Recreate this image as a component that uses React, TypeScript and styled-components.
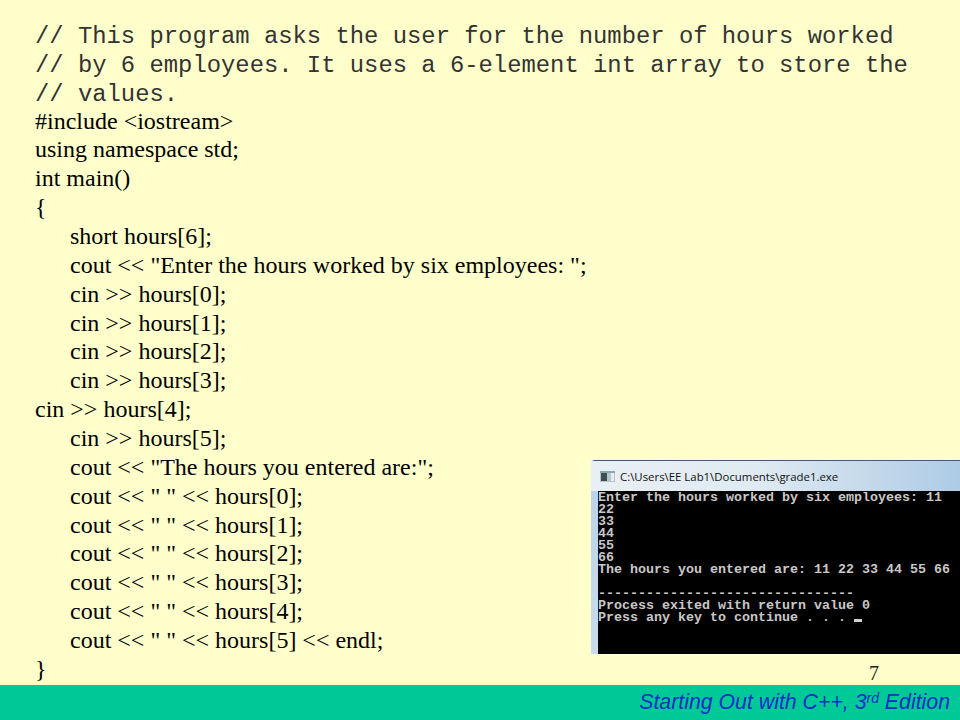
import React from "react";
import styled, { createGlobalStyle } from "styled-components";

const Global = createGlobalStyle`
  html, body {
    margin: 0;
    padding: 0;
  }
  body {
    background: #ffffcc;
  }
`;

const Slide = styled.div`
  position: relative;
  width: 960px;
  height: 720px;
  overflow: hidden;
  display: flex;
  flex-direction: column;
  background: #ffffcc;
`;

const Code = styled.div`
  flex: 1;
  padding: 20px 0 0 35px;
  color: #000;
`;

const Line = styled.div<{ $mono?: boolean; $indent?: boolean }>`
  height: 28.86px;
  line-height: ${(p) => (p.$mono ? "34px" : "28.86px")};
  white-space: pre;
  padding-left: ${(p) => (p.$indent ? "35px" : "0")};
  font-family: ${(p) =>
    p.$mono ? '"Liberation Mono", monospace' : '"Liberation Serif", serif'};
  font-size: ${(p) => (p.$mono ? "23.85px" : "24px")};
  color: ${(p) => (p.$mono ? "#333" : "#000")};
`;

const Footer = styled.div`
  height: 35px;
  flex-shrink: 0;
  display: flex;
  align-items: center;
  justify-content: flex-end;
  padding-right: 10px;
  background: #00c998;
  color: #0a2fc8;
  font-family: "Liberation Sans", Arial, sans-serif;
  font-style: italic;
  font-size: 21.3px;

  sup {
    font-size: 14px;
    line-height: 0;
    vertical-align: 6px;
  }
`;

const PageNumber = styled.div`
  position: absolute;
  left: 869px;
  top: 661px;
  font-family: "Liberation Serif", serif;
  font-size: 20px;
  line-height: 24px;
  color: #222;
`;

const Window = styled.div`
  position: absolute;
  left: 591px;
  top: 460px;
  width: 369px;
  height: 194px;
  box-sizing: border-box;
  display: flex;
  flex-direction: column;
  border-top-left-radius: 4px;
  border-top: 1px solid #4a5a6a;
  background: linear-gradient(180deg, #b9d2e8 0%, #c9dced 100%);
`;

const TitleBar = styled.div`
  height: 30px;
  flex-shrink: 0;
  display: flex;
  align-items: center;
  gap: 5px;
  padding-left: 9px;
  background: linear-gradient(90deg, #e9f0f4 0%, #dfeaf2 45%, #aecbe5 100%);
  font-family: "Open Sans", sans-serif;
  font-size: 11.4px;
  color: #111;
`;

const Terminal = styled.pre`
  flex: 1;
  margin: 0 0 0 7px;
  padding: 1px 0 0 0;
  background: #000;
  color: #c8c8c8;
  font-family: "Liberation Mono", monospace;
  font-weight: 700;
  font-size: 13.33px;
  line-height: 12px;
  overflow: hidden;
`;

const Cursor = styled.span`
  display: inline-block;
  width: 8px;
  height: 3px;
  background: #d0d0d0;
  vertical-align: -1px;
`;

const ConsoleIcon = () => (
  <svg width="15" height="11" viewBox="0 0 15 11">
    <rect x="0" y="0" width="15" height="11" fill="#b9c4ca" />
    <rect x="0" y="0" width="15" height="2" fill="#8ea6b4" />
    <rect x="1" y="2" width="6" height="8" fill="#3c4f50" />
    <rect x="11" y="2" width="3" height="8" fill="#e6edf0" />
  </svg>
);

const code: { text: string; mono?: boolean; indent?: boolean }[] = [
  { text: "// This program asks the user for the number of hours worked", mono: true },
  { text: "// by 6 employees. It uses a 6-element int array to store the", mono: true },
  { text: "// values.", mono: true },
  { text: "#include <iostream>" },
  { text: "using namespace std;" },
  { text: "int main()" },
  { text: "{" },
  { text: "short hours[6];", indent: true },
  { text: 'cout << "Enter the hours worked by six employees: ";', indent: true },
  { text: "cin >> hours[0];", indent: true },
  { text: "cin >> hours[1];", indent: true },
  { text: "cin >> hours[2];", indent: true },
  { text: "cin >> hours[3];", indent: true },
  { text: "cin >> hours[4];" },
  { text: "cin >> hours[5];", indent: true },
  { text: 'cout << "The hours you entered are:";', indent: true },
  { text: 'cout << " " << hours[0];', indent: true },
  { text: 'cout << " " << hours[1];', indent: true },
  { text: 'cout << " " << hours[2];', indent: true },
  { text: 'cout << " " << hours[3];', indent: true },
  { text: 'cout << " " << hours[4];', indent: true },
  { text: 'cout << " " << hours[5] << endl;', indent: true },
  { text: "}" },
];

const output = `Enter the hours worked by six employees: 11
22
33
44
55
66
The hours you entered are: 11 22 33 44 55 66

--------------------------------
Process exited with return value 0
Press any key to continue . . . `;

const App = () => {
  return (
    <>
      <Global />
      <Slide>
        <Code>
          {code.map((l, i) => (
            <Line key={i} $mono={l.mono} $indent={l.indent}>
              {l.text}
            </Line>
          ))}
        </Code>
        <Window>
          <TitleBar>
            <ConsoleIcon />
            C:\Users\EE Lab1\Documents\grade1.exe
          </TitleBar>
          <Terminal>
            {output}
            <Cursor />
          </Terminal>
        </Window>
        <PageNumber>7</PageNumber>
        <Footer>
          <span>
            Starting Out with C++, 3<sup>rd</sup> Edition
          </span>
        </Footer>
      </Slide>
    </>
  );
};

export default App;
